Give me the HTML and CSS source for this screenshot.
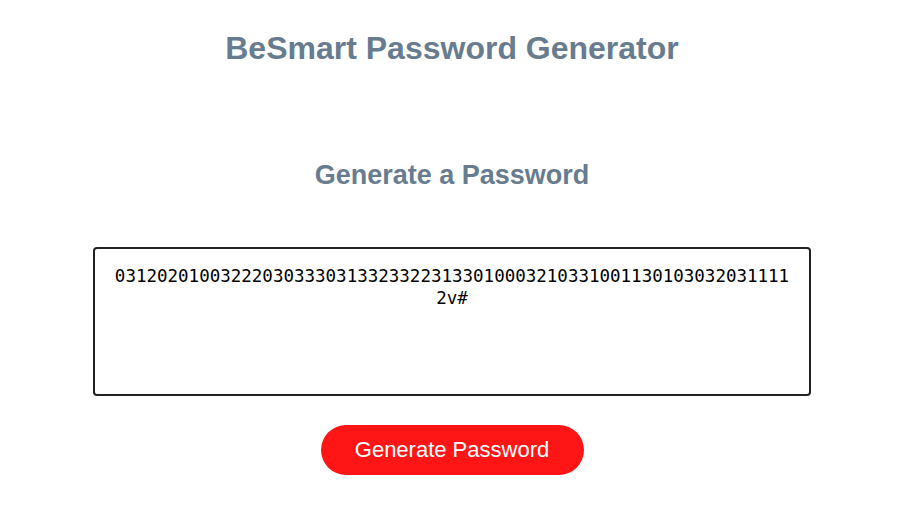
FILE: index.html
```html
<!DOCTYPE html>
<html lang="en">
<head>
<meta charset="UTF-8">
<title>BeSmart Password Generator</title>
<link rel="stylesheet" href="styles.css">
</head>
<body>
<div class="wrapper">
  <header class="site-header">
    <h1 class="site-title">BeSmart Password Generator</h1>
  </header>
  <main class="card">
    <h2 class="card-title">Generate a Password</h2>
    <div class="card-body">
      <textarea class="password" readonly aria-label="Generated Password">03120201003222030333031332332231330100032103310011301030320311112v#</textarea>
    </div>
    <div class="card-footer">
      <button class="btn">Generate Password</button>
    </div>
  </main>
</div>
</body>
</html>
```

FILE: styles.css
```css
* { box-sizing: border-box; }
html, body { margin: 0; padding: 0; background: #fff; }
body { font-family: "Liberation Sans", Arial, sans-serif; }
.wrapper { display: flex; flex-direction: column; align-items: center; padding-left: 7px; }
.site-header { padding-top: 29px; }
.site-title {
  margin: 0;
  font-size: 32px;
  font-weight: bold;
  color: #687c90;
  line-height: 38px;
}
.card { width: 718px; display: flex; flex-direction: column; align-items: center; margin-top: 93px; }
.card-title {
  margin: 0;
  font-size: 27px;
  font-weight: bold;
  color: #687c90;
  line-height: 30px;
}
.card-body { width: 718px; margin-top: 57px; }
.password {
  display: block;
  width: 718px;
  height: 149px;
  border: 2px solid #222;
  border-radius: 4px;
  padding: 16px 18px;
  font-family: "DejaVu Sans Mono", monospace;
  font-size: 17.5px;
  line-height: 22px;
  text-align: center;
  color: #000;
  resize: none;
  word-break: break-all;
}
.card-footer { margin-top: 29px; }
.btn {
  width: 263px;
  height: 50px;
  border: none;
  border-radius: 25px;
  background: #fe1616;
  color: #fff;
  font-family: "Liberation Sans", Arial, sans-serif;
  font-size: 22px;
}
```
